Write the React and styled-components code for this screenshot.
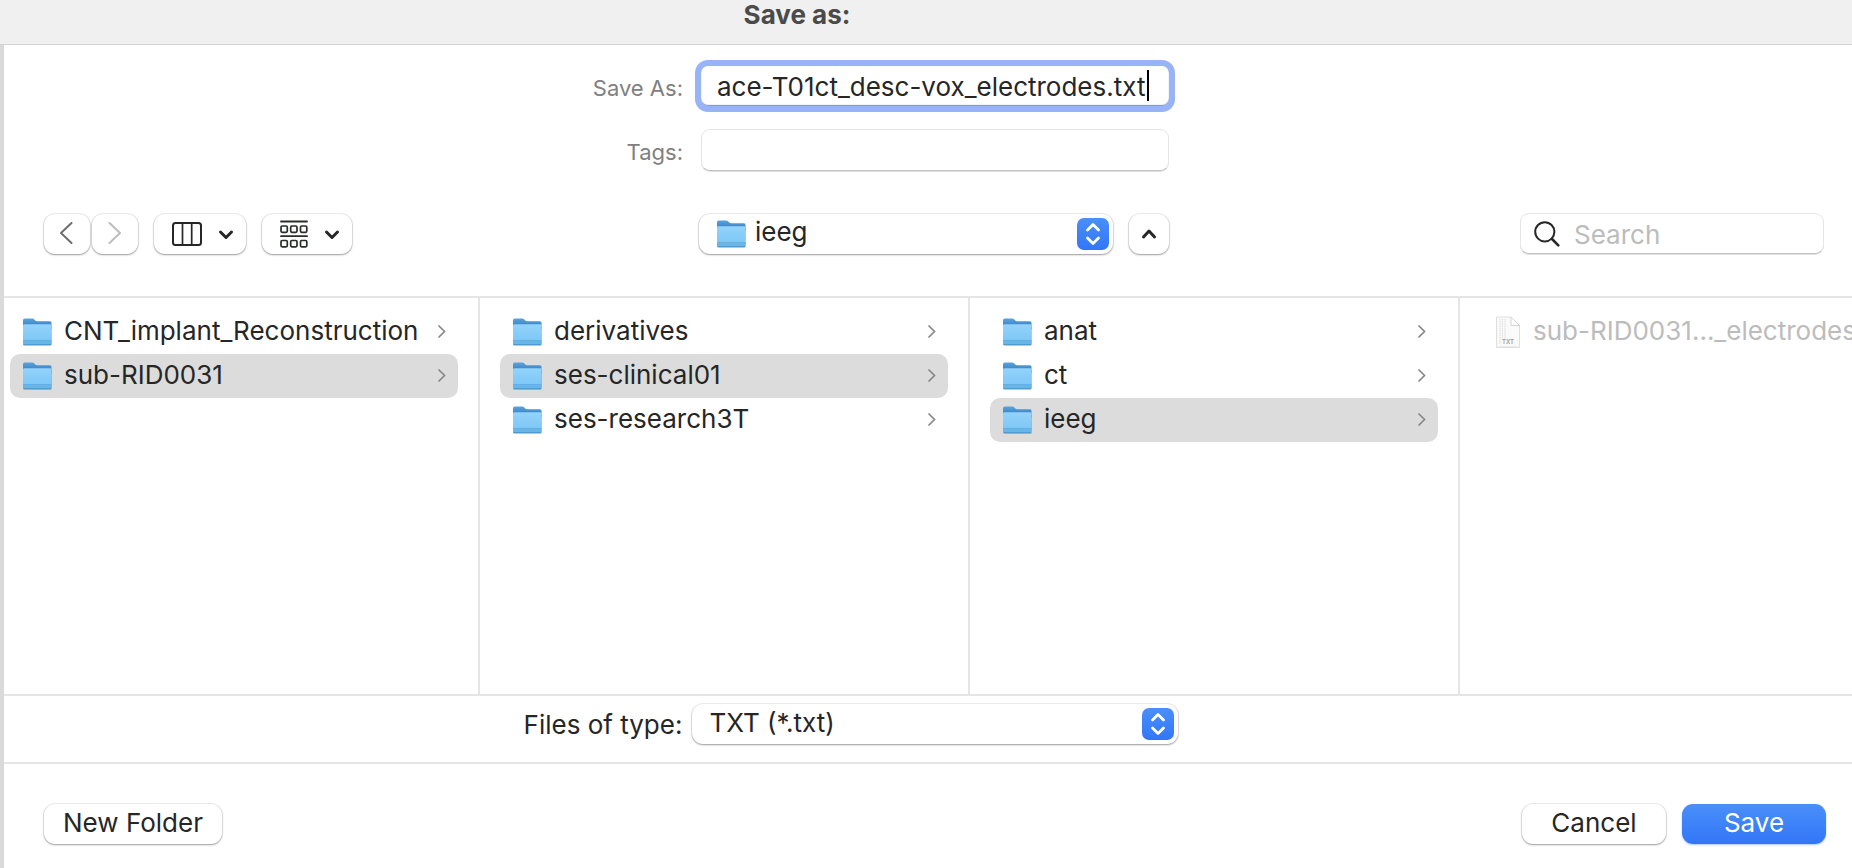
import React, { useState } from "react";
import styled, { createGlobalStyle, css } from "styled-components";

const GlobalStyle = createGlobalStyle`
  *, *::before, *::after { box-sizing: border-box; }
  body {
    margin: 0;
    background: #ffffff;
    color: #262626;
    font-family: Inter, "Liberation Sans", sans-serif;
    font-size: 26px;
    line-height: 32px;
    overflow-x: hidden;
  }
  button, input, select { font: inherit; color: inherit; margin: 0; }
`;

const raised = css`
  background: #ffffff;
  border: 0;
  border-radius: 11px;
  box-shadow: 0 0 0 1px rgba(0, 0, 0, 0.07), 0 1px 2px rgba(0, 0, 0, 0.34);
`;

const Window = styled.div`
  min-height: 100vh;
  display: flex;
  flex-direction: column;
`;

const TitleBar = styled.header`
  height: 45px;
  flex: none;
  padding-right: 258px;
  background: #f0f0f0;
  border-bottom: 1px solid #d3d3d3;
  text-align: center;
`;

const Title = styled.h1`
  margin: 0;
  color: #4a4a4a;
  font-size: 26px;
  line-height: 30px;
  font-weight: 700;
`;

const Sheet = styled.form`
  flex: 1;
  display: flex;
  flex-direction: column;
  border-left: 4px solid #d9d9d9;
`;

const Fields = styled.div`
  display: grid;
  grid-template-columns: 1fr 468px 1fr;
  column-gap: 18px;
  row-gap: 23px;
  padding: 21px 0 0 14px;
  align-items: center;
`;

const FieldLabel = styled.label`
  grid-column: 1;
  justify-self: end;
  padding-top: 4px;
  color: #808080;
  font-size: 22px;
`;

const NameBox = styled.div`
  position: relative;
  grid-column: 2;
  height: 40px;
  border-radius: 7px;
  background: #ffffff;
  box-shadow: 0 0 0 6px #98b3f8, inset 0 -1px 1px #7290d4;
`;

const fieldText = css`
  display: block;
  width: 100%;
  height: 100%;
  border: 0;
  outline: 0;
  padding: 0 16px;
  background: transparent;
`;

const NameInput = styled.input`
  ${fieldText}
  caret-color: transparent;
`;

const Caret = styled.span`
  position: absolute;
  top: 4px;
  right: 20px;
  width: 2px;
  height: 31px;
  background: #000000;
`;

const flatField = css`
  border-radius: 9px;
  background: #ffffff;
  border: 1px solid #e6e6e6;
  border-bottom: 1px solid #c2c2c2;
  box-shadow: 0 1px 0 #e0e0e0;
`;

const TagsInput = styled.input`
  ${fieldText}
  ${flatField}
  grid-column: 2;
  height: 42px;
`;

const Toolbar = styled.div`
  display: grid;
  grid-template-columns: 1fr 470px 1fr;
  align-items: center;
  margin-top: 42px;
  padding: 0 28px 42px 40px;
`;

const ToolGroup = styled.div`
  display: flex;
  gap: ${(p) => p.$gap}px;
`;

const ToolButton = styled.button`
  ${raised}
  width: ${(p) => p.$width}px;
  height: 40px;
  padding: 0 0 0 ${(p) => (p.$menu ? 6 : 0)}px;
  display: flex;
  align-items: center;
  justify-content: center;
  gap: 16px;
`;

const Place = styled.div`
  display: flex;
  gap: 16px;
`;

const Popup = styled.div`
  ${raised}
  width: ${(p) => p.$width}px;
  height: 40px;
  display: flex;
  align-items: center;
  gap: 8px;
  padding: 0 4px 0 17px;
`;

const Select = styled.select`
  flex: 1;
  min-width: 0;
  height: 40px;
  padding: 0 0 3px;
  border: 0;
  outline: 0;
  appearance: none;
  background: transparent;
`;

const SearchBox = styled.label`
  ${flatField}
  justify-self: end;
  width: 304px;
  height: 41px;
  display: flex;
  align-items: center;
  gap: 14px;
  padding-left: 13px;
`;

const SearchInput = styled.input`
  flex: 1;
  min-width: 0;
  height: 38px;
  padding: 2px 0 0;
  border: 0;
  outline: 0;
  background: transparent;
  &::placeholder { color: #bcbcbc; opacity: 1; }
`;

const Browser = styled.div`
  flex: 1;
  min-height: 240px;
  display: flex;
  border-top: 2px solid #e5e5e5;
  border-bottom: 2px solid #e5e5e5;
  overflow: hidden;
`;

const Column = styled.ul`
  flex: none;
  width: ${(p) => (p.$first ? 476 : 490)}px;
  margin: 0;
  padding: 12px 20px 12px ${(p) => (p.$first ? 6 : 20)}px;
  border-right: 2px solid #e5e5e5;
  list-style: none;
`;

const Item = styled.button`
  width: 100%;
  height: 44px;
  padding: 0 12px;
  display: flex;
  align-items: center;
  gap: 11px;
  border: 0;
  border-radius: 10px;
  background: ${(p) => (p.$selected ? "#dcdcdc" : "transparent")};
  color: ${(p) => (p.$dim ? "#bcbcbc" : "#262626")};
  text-align: left;
  white-space: nowrap;
`;

const ItemName = styled.span`
  flex: 1;
  padding-bottom: 2px;
`;

const TypeBar = styled.div`
  display: flex;
  align-items: center;
  justify-content: center;
  gap: 10px;
  height: 68px;
  padding: 0 154px 10px 0;
  border-bottom: 2px solid #e5e5e5;
`;

const TypeLabel = styled.label`
  padding-top: 2px;
`;

const Footer = styled.footer`
  display: flex;
  gap: 16px;
  padding: 40px 26px 24px 40px;
`;

const PushButton = styled.button`
  ${raised}
  width: ${(p) => p.$width}px;
  height: 40px;
  padding: 0 0 3px;
  ${(p) =>
    p.$start &&
    css`
      margin-right: auto;
    `}
  ${(p) =>
    p.$primary &&
    css`
      color: #ffffff;
      background: linear-gradient(#4a8ff9, #3276f8);
      box-shadow: 0 1px 2px rgba(50, 118, 248, 0.4);
    `}
`;

const Icon = styled.svg`
  display: block;
  flex: none;
  pointer-events: none;
`;

function FolderIcon() {
  return (
    <Icon width="31" height="30" viewBox="0 0 31 30" aria-hidden="true">
      <defs>
        <linearGradient id="folderFront" x1="0" y1="0" x2="0" y2="1">
          <stop offset="0" stopColor="#92d3fb" />
          <stop offset="1" stopColor="#79c4f4" />
        </linearGradient>
        <linearGradient id="folderBack" x1="0" y1="0" x2="0" y2="1">
          <stop offset="0" stopColor="#5aa4da" />
          <stop offset="1" stopColor="#2e73bd" />
        </linearGradient>
      </defs>
      <rect x="1" y="9" width="29" height="20" rx="2" fill="#000000" opacity="0.2" />
      <path d="M1 3.200Q1 1.500 2.700 1.500H10.300Q11.300 1.500 12 2.200L13.300 3.500Q14 4.200 15 4.200H28Q29.500 4.200 29.500 5.700V12H1Z" fill="url(#folderBack)" />
      <path d="M1 8.500Q1 7.300 2.200 7.300H28.300Q29.500 7.300 29.500 8.500V26.500Q29.500 28 28 28H2.500Q1 28 1 26.500Z" fill="url(#folderFront)" />
      <path d="M1 24H29.500V26.500Q29.500 28 28 28H2.500Q1 28 1 26.500Z" fill="#68b5e8" />
      <path d="M1 23.500H29.500" stroke="#5ba9df" strokeWidth="0.800" />
      <path d="M1.500 27.600H29" stroke="#4b97cb" strokeWidth="0.900" />
    </Icon>
  );
}

function TextFileIcon() {
  return (
    <Icon width="30" height="34" viewBox="0 0 30 34" aria-hidden="true">
      <path d="M4.500 2H19L27.500 10.500V32H4.500Z" fill="#000000" opacity="0.12" transform="translate(0 1)" />
      <path d="M4.500 2H19L27.500 10.500V32H4.500Z" fill="#fafafa" stroke="#dedede" strokeWidth="1" />
      <path d="M8 4V29M10.500 4V24M13 4V24" stroke="#dddddd" strokeWidth="1" strokeDasharray="1.500 0.700" />
      <path d="M19 2V10.500H27.500Z" fill="#ffffff" stroke="#d5d5d5" strokeWidth="1" />
      <text x="16" y="28.500" textAnchor="middle" fontSize="6" fontWeight="600" fill="#999999">TXT</text>
    </Icon>
  );
}

function ItemArrow() {
  return (
    <Icon width="8" height="14" viewBox="0 0 8 14" fill="none" stroke="#858585" strokeWidth="1.700" strokeLinecap="round" strokeLinejoin="round" aria-hidden="true">
      <path d="M1 1L6.600 6.500L1 12" />
    </Icon>
  );
}

function NavArrow({ forward }) {
  return (
    <Icon width="14" height="24" viewBox="0 0 14 24" fill="none" stroke={forward ? "#bdbdbd" : "#6e6e6e"} strokeWidth="2" strokeLinecap="round" strokeLinejoin="round" aria-hidden="true">
      <path d={forward ? "M1.500 1L12 11L1.500 21" : "M11.500 1L1 11L11.500 21"} />
    </Icon>
  );
}

function DownArrow() {
  return (
    <Icon width="16" height="12" viewBox="0 0 16 12" fill="none" stroke="#262626" strokeWidth="3" strokeLinecap="round" strokeLinejoin="round" aria-hidden="true">
      <path d="M2.500 4L8 9.500L13.500 4" />
    </Icon>
  );
}

function UpArrow() {
  return (
    <Icon width="16" height="12" viewBox="0 0 16 12" fill="none" stroke="#262626" strokeWidth="3" strokeLinecap="round" strokeLinejoin="round" aria-hidden="true">
      <path d="M2.500 9L8 3L13.500 9" />
    </Icon>
  );
}

function ColumnsIcon() {
  return (
    <Icon width="30" height="24" viewBox="0 0 30 24" fill="none" stroke="#262626" aria-hidden="true">
      <rect x="1" y="1" width="28" height="22" rx="2.500" strokeWidth="2" />
      <path d="M10.500 1V23M19.700 1V23" strokeWidth="1.700" />
    </Icon>
  );
}

function GroupIcon() {
  return (
    <Icon width="28" height="28" viewBox="0 0 28 28" fill="none" stroke="#2a2e2a" aria-hidden="true">
      <path d="M1 1.500H27M1 16.200H27" strokeWidth="1.800" strokeLinecap="round" />
      {[6, 20.5].map((y) =>
        [1, 10.7, 20.5].map((x) => (
          <rect key={`${x}-${y}`} x={x} y={y} width="6.300" height="6.300" rx="1.200" strokeWidth="1.700" />
        ))
      )}
    </Icon>
  );
}

function SearchIcon() {
  return (
    <Icon width="26" height="26" viewBox="0 0 26 26" fill="none" stroke="#262626" strokeLinecap="round" aria-hidden="true">
      <circle cx="10.800" cy="10.800" r="9.600" strokeWidth="2" />
      <path d="M18 18L24.300 24.300" strokeWidth="2.600" />
    </Icon>
  );
}

function Stepper() {
  return (
    <Icon width="32" height="32" viewBox="0 0 32 32" fill="none" aria-hidden="true">
      <defs>
        <linearGradient id="stepper" x1="0" y1="0" x2="0" y2="1">
          <stop offset="0" stopColor="#4a8ff9" />
          <stop offset="1" stopColor="#3276f8" />
        </linearGradient>
      </defs>
      <rect width="32" height="32" rx="7" fill="url(#stepper)" />
      <path d="M10.500 12L16 6.500L21.500 12M10.500 20L16 25.500L21.500 20" stroke="#ffffff" strokeWidth="2.800" strokeLinecap="round" strokeLinejoin="round" />
    </Icon>
  );
}

const columns = [
  { names: ["CNT_implant_Reconstruction", "sub-RID0031"], selected: "sub-RID0031" },
  { names: ["derivatives", "ses-clinical01", "ses-research3T"], selected: "ses-clinical01" },
  { names: ["anat", "ct", "ieeg"], selected: "ieeg" },
];

export default function App() {
  const [name, setName] = useState("ace-T01ct_desc-vox_electrodes.txt");

  return (
    <>
      <GlobalStyle />
      <Window>
        <TitleBar>
          <Title>Save as:</Title>
        </TitleBar>
        <Sheet onSubmit={(e) => e.preventDefault()}>
          <Fields>
            <FieldLabel htmlFor="name">Save As:</FieldLabel>
            <NameBox>
              <NameInput id="name" value={name} onChange={(e) => setName(e.target.value)} />
              <Caret />
            </NameBox>
            <FieldLabel htmlFor="tags">Tags:</FieldLabel>
            <TagsInput id="tags" />
          </Fields>

          <Toolbar>
            <ToolGroup $gap={16}>
              <ToolGroup $gap={2}>
                <ToolButton type="button" $width={46} aria-label="Back"><NavArrow /></ToolButton>
                <ToolButton type="button" $width={46} aria-label="Forward"><NavArrow forward /></ToolButton>
              </ToolGroup>
              <ToolButton type="button" $width={92} $menu aria-label="View as columns"><ColumnsIcon /><DownArrow /></ToolButton>
              <ToolButton type="button" $width={90} $menu aria-label="Group items"><GroupIcon /><DownArrow /></ToolButton>
            </ToolGroup>
            <Place>
              <Popup $width={414}>
                <FolderIcon />
                <Select aria-label="Folder" defaultValue="ieeg">
                  <option>ieeg</option>
                </Select>
                <Stepper />
              </Popup>
              <ToolButton type="button" $width={40} aria-label="Collapse"><UpArrow /></ToolButton>
            </Place>
            <SearchBox>
              <SearchIcon />
              <SearchInput placeholder="Search" aria-label="Search" />
            </SearchBox>
          </Toolbar>

          <Browser>
            {columns.map((column, index) => (
              <Column key={column.selected} $first={index === 0}>
                {column.names.map((item) => (
                  <li key={item}>
                    <Item type="button" $selected={item === column.selected}>
                      <FolderIcon />
                      <ItemName>{item}</ItemName>
                      <ItemArrow />
                    </Item>
                  </li>
                ))}
              </Column>
            ))}
            <Column>
              <li>
                <Item type="button" $dim>
                  <TextFileIcon />
                  <ItemName>sub-RID0031..._electrodes</ItemName>
                </Item>
              </li>
            </Column>
          </Browser>

          <TypeBar>
            <TypeLabel htmlFor="type">Files of type:</TypeLabel>
            <Popup $width={486}>
              <Select id="type" defaultValue="TXT (*.txt)">
                <option>TXT (*.txt)</option>
              </Select>
              <Stepper />
            </Popup>
          </TypeBar>

          <Footer>
            <PushButton type="button" $width={178} $start>New Folder</PushButton>
            <PushButton type="button" $width={144}>Cancel</PushButton>
            <PushButton type="submit" $width={144} $primary>Save</PushButton>
          </Footer>
        </Sheet>
      </Window>
    </>
  );
}
